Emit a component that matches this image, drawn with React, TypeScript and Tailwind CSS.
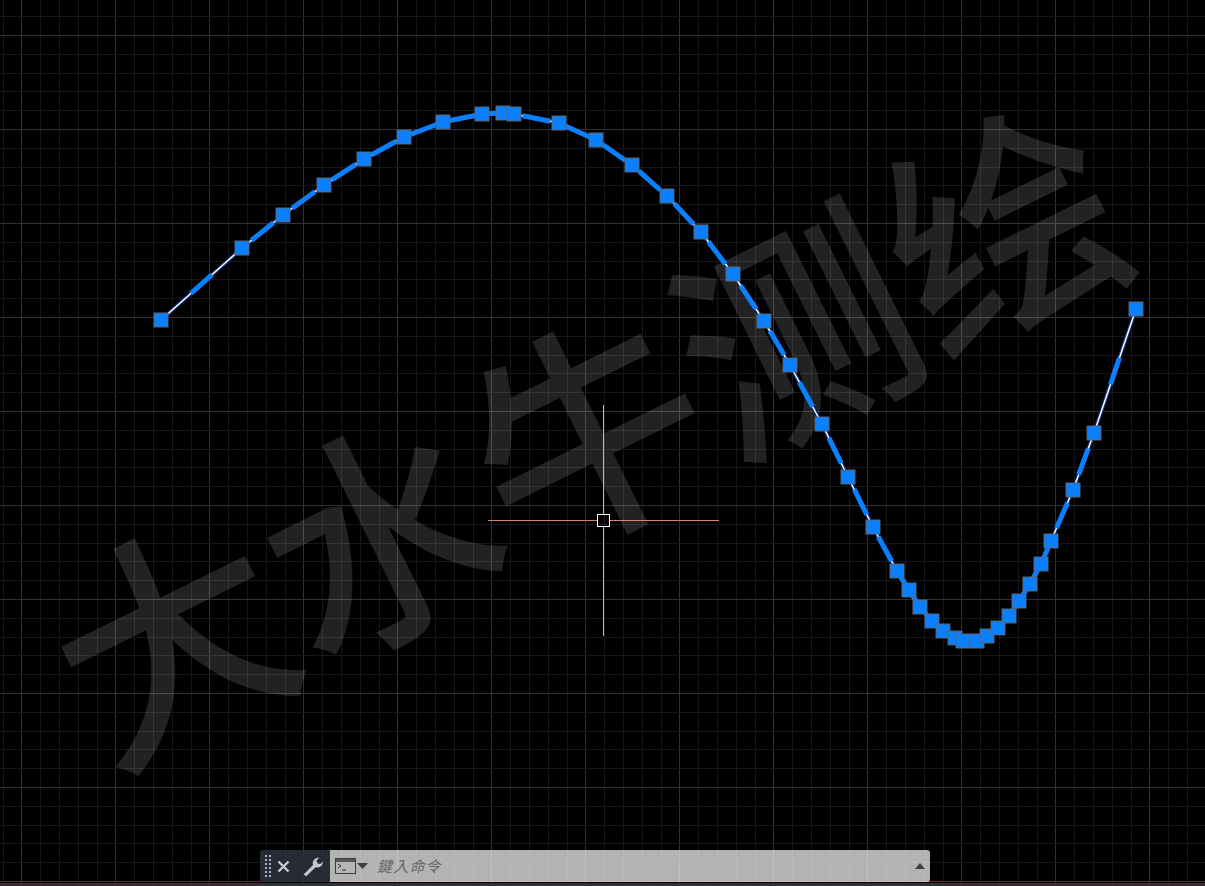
const points = [
  [161, 320], [242, 248], [283, 215], [324, 185], [364, 159], [404, 137], [443, 122], [482, 114], [503, 113], [514, 114],
  [559, 123], [596, 140], [632, 165], [667, 196], [701, 232], [733, 274], [764, 321], [790, 365], [822, 424], [848, 477],
  [873, 527], [897, 571], [909, 590], [920, 607], [932, 621], [943, 631], [955, 638], [963, 641], [977, 641], [987, 636],
  [998, 628], [1009, 616], [1019, 601], [1030, 584], [1041, 564], [1051, 541], [1073, 490], [1094, 433], [1136, 309],
]

const polyline = points.map((p) => p.join(",")).join(" ")

const gridX = Array.from({ length: 65 }, (_, i) => 2.6 + i * 18.8)
const gridY = Array.from({ length: 48 }, (_, i) => -2.6 + i * 18.8)

// blue part of every segment sits around its middle, leaving the white chord at the ends
function blueSpan(a: number[], b: number[]) {
  const dx = b[0] - a[0]
  const dy = b[1] - a[1]
  const len = Math.hypot(dx, dy)
  const half = Math.min(len * 0.36, 14)
  const mx = a[0] + dx * 0.5
  const my = a[1] + dy * 0.5
  return [mx - (dx / len) * half, my - (dy / len) * half, mx + (dx / len) * half, my + (dy / len) * half]
}

function Drawing() {
  return (
    <svg className="absolute inset-0" width="1205" height="886" viewBox="0 0 1205 886">
      {gridX.map((x, i) => (
        <line key={x} x1={Math.round(x) + 0.5} x2={Math.round(x) + 0.5} y1="0" y2="886" stroke={i % 5 === 1 ? "#303037" : "#16161c"} />
      ))}
      {gridY.map((y, i) => (
        <line key={y} y1={Math.round(y) + 0.5} y2={Math.round(y) + 0.5} x1="0" x2="1205" stroke={i % 5 === 2 ? "#303037" : "#16161c"} />
      ))}
    </svg>
  )
}

function Curve() {
  return (
    <svg className="absolute inset-0" width="1205" height="886" viewBox="0 0 1205 886">
      <polyline points={polyline} fill="none" stroke="#0a2a6b" strokeWidth="4" />
      <polyline points={polyline} fill="none" stroke="#ffffff" strokeWidth="1.5" />
      {points.slice(1).map((p, i) => {
        const [x1, y1, x2, y2] = blueSpan(points[i], p)
        return <line key={i} x1={x1} y1={y1} x2={x2} y2={y2} stroke="#0a80ff" strokeWidth="5" />
      })}
      {points.map(([x, y]) => (
        <rect key={x} x={x - 7} y={y - 7} width="14" height="14" fill="#0a80ff" stroke="#5a6470" strokeWidth="1" />
      ))}
      <line x1="488" x2="597" y1="520.5" y2="520.5" stroke="#d9826f" />
      <line x1="609" x2="719" y1="520.5" y2="520.5" stroke="#d9826f" />
      <line x1="603.5" x2="603.5" y1="405" y2="514" stroke="#a9cf8d" />
      <line x1="603.5" x2="603.5" y1="526" y2="636" stroke="#a9cf8d" />
      <rect x="597.5" y="514.5" width="12" height="12" fill="none" stroke="#ffffff" strokeWidth="1" />
      <line x1="0" x2="1205" y1="881.5" y2="881.5" stroke="#7a1f24" />
    </svg>
  )
}

function Watermark() {
  return (
    <div className="absolute left-[2px] top-[284px] flex origin-center -rotate-[26.3deg] whitespace-nowrap text-[232px] font-medium leading-[1.2] text-white/[0.135] font-['Noto_Sans_CJK_SC',sans-serif]">
      大水牛测绘
    </div>
  )
}

function CommandBar() {
  return (
    <div className="relative ml-[260px] flex h-8 w-[670px]">
      <div className="flex w-[70px] items-center rounded-l-[3px] bg-[#2a303c]/90">
        <div className="ml-[5px] grid grid-cols-2 gap-x-[2px] gap-y-[2px]">
          {Array.from({ length: 12 }, (_, i) => (
            <div key={i} className="size-[2px] bg-[#aab0b8]" />
          ))}
        </div>
        <svg className="ml-[6px]" width="13" height="13" viewBox="0 0 13 13">
          <path d="M1.5 1.5 11.5 11.5M11.5 1.5 1.5 11.5" stroke="#c8ccd0" strokeWidth="2.4" />
        </svg>
        <svg className="ml-[12px]" width="22" height="22" viewBox="0 0 21 21">
          <path d="M1.5 18.5 10.5 9.5C9.5 6 12 2.5 16.5 2.5L13.8 5.6 15 8 17.6 8.6 19.8 6C20.2 10 16.8 12.8 13 11.6L4 20.2Z" fill="#c4c8cc" />
        </svg>
      </div>
      <div className="flex flex-1 items-center rounded-r-[3px] bg-white/70">
        <svg className="ml-[5px]" width="21" height="16" viewBox="0 0 21 16">
          <rect x="0.5" y="0.5" width="20" height="15" fill="#b5b5b5" stroke="#3c3c3c" />
          <rect x="1" y="1" width="19" height="3" fill="#555555" />
          <path d="M3 6 6 8 3 10M7 12H11" fill="none" stroke="#333333" />
        </svg>
        <svg className="ml-[1px]" width="11" height="6" viewBox="0 0 11 6">
          <path d="M0 0H11L5.5 6Z" fill="#3f3f3f" />
        </svg>
        <span className="ml-[9px] text-[15px] italic tracking-[1.2px] text-[#666666] font-['Noto_Sans_CJK_TC',sans-serif]">鍵入命令</span>
        <svg className="ml-auto mr-[5px]" width="10" height="6" viewBox="0 0 10 6">
          <path d="M0 6H10L5 0Z" fill="#3f3f3f" />
        </svg>
      </div>
    </div>
  )
}

export default function App() {
  return (
    <div className="relative flex h-[886px] w-[1205px] flex-col justify-end overflow-hidden bg-black">
      <Drawing />
      <Watermark />
      <Curve />
      <CommandBar />
      <div className="relative mt-[1px] h-[3px] bg-[#2c3238]" />
    </div>
  )
}
